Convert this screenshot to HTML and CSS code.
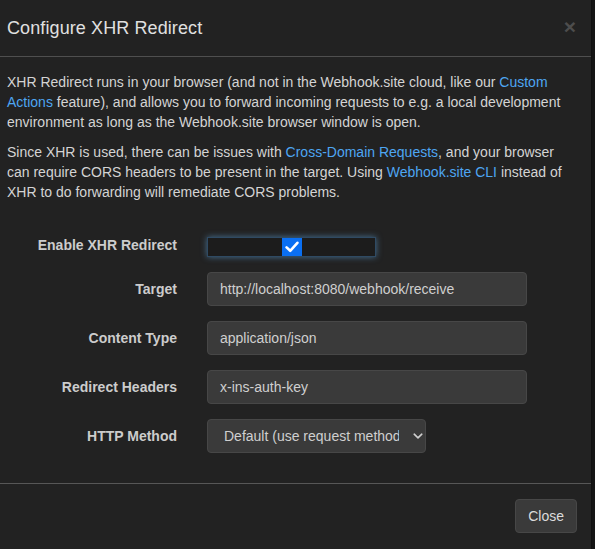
FILE: index.html
```
<!DOCTYPE html>
<html lang="en">
<head>
<meta charset="utf-8">
<title>Configure XHR Redirect</title>
<link rel="stylesheet" href="styles.css">
</head>
<body>
<div class="modal">
  <div class="modal-header">
    <h4 class="modal-title">Configure XHR Redirect</h4>
    <span class="close">&times;</span>
  </div>
  <div class="modal-body">
    <p>XHR Redirect runs in your browser (and not in the Webhook.site cloud, like our <a href="#">Custom Actions</a> feature), and allows you to forward incoming requests to e.g. a local development environment as long as the Webhook.site browser window is open.</p>
    <p>Since XHR is used, there can be issues with <a href="#">Cross-Domain Requests</a>, and your browser can require CORS headers to be present in the target. Using <a href="#">Webhook.site CLI</a> instead of XHR to do forwarding will remediate CORS problems.</p>
    <form class="form">
      <div class="row row-check">
        <label class="label">Enable XHR Redirect</label>
        <div class="checkwrap">
          <span class="tick">
            <svg width="14" height="12" viewBox="0 0 14 12"><path d="M1.6 6.4 L5.2 9.8 L12.4 1.8" fill="none" stroke="#fff" stroke-width="2.6" stroke-linecap="round" stroke-linejoin="round"/></svg>
          </span>
        </div>
      </div>
      <div class="row">
        <label class="label">Target</label>
        <div class="input">http://localhost:8080/webhook/receive</div>
      </div>
      <div class="row">
        <label class="label">Content Type</label>
        <div class="input">application/json</div>
      </div>
      <div class="row">
        <label class="label">Redirect Headers</label>
        <div class="input">x-ins-auth-key</div>
      </div>
      <div class="row">
        <label class="label">HTTP Method</label>
        <div class="select">
          <span class="select-text">Default (use request method)</span>
          <svg class="chev" width="10" height="6" viewBox="0 0 10 6"><path d="M1.2 1.2 L5 4.8 L8.8 1.2" fill="none" stroke="#cfcfcf" stroke-width="1.6" stroke-linecap="round" stroke-linejoin="round"/></svg>
        </div>
      </div>
    </form>
  </div>
  <div class="modal-footer">
    <button class="btn" type="button">Close</button>
  </div>
</div>
</body>
</html>
```
FILE: styles.css
```
* { box-sizing: border-box; }
html, body { margin: 0; padding: 0; }
body {
  background: #141414;
  font-family: "Liberation Sans", Arial, Helvetica, sans-serif;
  font-size: 14px;
  line-height: 20px;
  color: #d4d4d4;
  width: 595px;
  height: 549px;
  overflow: hidden;
}
.modal {
  width: 592px;
  height: 549px;
  background: #222222;
  border-right: 1px solid #101010;
  display: flex;
  flex-direction: column;
}
.modal-header {
  display: flex;
  justify-content: space-between;
  align-items: flex-start;
  padding: 15px 15px 15px 7px;
  border-bottom: 1px solid #4f4f4f;
}
.modal-title {
  margin: 0;
  font-size: 18px;
  line-height: 26px;
  font-weight: normal;
  color: #e0e0e0;
  letter-spacing: 0.1px;
}
.close {
  font-size: 21px;
  font-weight: bold;
  line-height: 21px;
  color: #4d4d4d;
  margin-top: 1px;
}
.modal-body {
  padding: 15px 15px 15px 7px;
  flex: 1;
}
.modal-body p {
  margin: 0 0 10px;
}
a {
  color: #4ea6f2;
  text-decoration: none;
}
.form {
  display: flex;
  flex-direction: column;
  gap: 15px;
}
.row {
  display: grid;
  grid-template-columns: 170px 320px;
  column-gap: 30px;
  align-items: center;
}
.row-check {
  padding-top: 23px;
  align-items: start;
}
.row-check .checkwrap {
  margin-top: 2px;
}
.label {
  text-align: right;
  font-weight: bold;
  color: #cccccc;
}
.checkwrap {
  width: 169px;
  height: 20px;
  background: #1c1c1c;
  border: 1px solid #2f4a63;
  box-shadow: 0 0 6px rgba(102, 175, 233, 0.55);
  display: flex;
  justify-content: center;
}
.tick {
  width: 20px;
  height: 18px;
  background: #0a6ff2;
  display: flex;
  align-items: center;
  justify-content: center;
}
.input, .select {
  height: 34px;
  padding: 6px 12px;
  background: #3a3a3a;
  border: 1px solid #474747;
  border-radius: 4px;
  color: #cfcfcf;
  line-height: 20px;
  white-space: nowrap;
  overflow: hidden;
}
.select {
  width: 219px;
  display: flex;
  align-items: center;
  padding: 6px 0 6px 16px;
}
.select-text {
  width: 175px;
  overflow: hidden;
  white-space: nowrap;
}
.chev {
  margin-left: 14px;
}
.modal-footer {
  display: flex;
  justify-content: flex-end;
  padding: 15px 14px 16px 15px;
  border-top: 1px solid #575757;
}
.btn {
  font-family: "Liberation Sans", Arial, Helvetica, sans-serif;
  font-size: 14px;
  line-height: 20px;
  height: 34px;
  padding: 6px 12px;
  background: #3a3a3a;
  border: 1px solid #474747;
  border-radius: 4px;
  color: #dcdcdc;
}
```
